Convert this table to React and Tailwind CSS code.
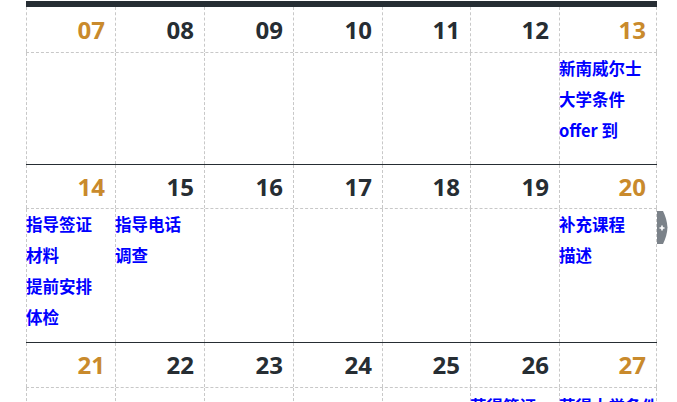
import React from "react";

const weeks = [
  {
    days: ["07", "08", "09", "10", "11", "12", "13"],
    headH: "h-[46px]",
    bodyH: "h-[112px]",
    solid: true,
    pad: "",
    events: { 6: [["新南威尔士", "大学条件", "offer 到"]] },
  },
  {
    days: ["14", "15", "16", "17", "18", "19", "20"],
    headH: "h-[44px]",
    bodyH: "h-[134px]",
    solid: true,
    pad: "",
    events: {
      0: [["指导签证", "材料"], ["提前安排", "体检"]],
      1: [["指导电话", "调查"]],
      6: [["补充课程", "描述"]],
    },
  },
  {
    days: ["21", "22", "23", "24", "25", "26", "27"],
    headH: "h-[45px]",
    bodyH: "h-[134px]",
    solid: false,
    pad: "pt-[3px]",
    events: { 5: [["获得签证", "结果"]], 6: [["获得大学条件", "offer"]] },
  },
];

const cellBase = "border-l border-dashed border-[#c8c8c8]";

function Cell({ i, className, children }) {
  return (
    <div className={`${cellBase} ${i === 6 ? "border-r" : ""} ${className}`}>
      {children}
    </div>
  );
}

export default function App() {
  return (
    <div className="relative w-[677px] h-[402px] overflow-hidden bg-white pt-[1px]">
      <div className="ml-[26px] w-[631px]">
        <div className="h-[6px] bg-[#262d33]" />
        {weeks.map((w, wi) => (
          <div key={wi}>
            <div
              className={`grid grid-cols-[89px_89px_89px_89px_88px_89px_98px] ${w.headH} border-b border-dashed border-[#c8c8c8]`}
            >
              {w.days.map((d, i) => (
                <Cell key={i} i={i} className="flex items-center justify-end pr-[10px]">
                  <span
                    className={`font-['Open_Sans',sans-serif] font-bold text-[24px] leading-none ${
                      i === 0 || i === 6 ? "text-[#c98a2c]" : "text-[#262d33]"
                    }`}
                  >
                    {d}
                  </span>
                </Cell>
              ))}
            </div>
            <div
              className={`grid grid-cols-[89px_89px_89px_89px_88px_89px_98px] ${w.bodyH} ${
                w.solid ? "border-b border-solid border-[#262d33]" : ""
              }`}
            >
              {w.days.map((d, i) => (
                <Cell key={i} i={i} className={w.pad}>
                  {(w.events[i] || []).map((ev, ei) => (
                    <div
                      key={ei}
                      className="-ml-px font-['Noto_Sans_CJK_SC',sans-serif] font-bold text-[16.5px] leading-[31px] text-[#0000ff] whitespace-nowrap"
                    >
                      {ev.map((line, li) => (
                        <div key={li}>{line}</div>
                      ))}
                    </div>
                  ))}
                </Cell>
              ))}
            </div>
          </div>
        ))}
      </div>
      <div className="absolute left-[657px] top-[211px] w-[11px] h-[33px]">
        <svg width="11" height="33" viewBox="0 0 11 33">
          <path d="M0 0 H6 Q10 8 10.5 16.5 Q10 25 6 33 H0 Z" fill="#7b8289" />
          <path d="M2.5 17 H7.5 M5 14.5 V19.5" stroke="#ffffff" strokeWidth="1.6" />
        </svg>
      </div>
    </div>
  );
}
